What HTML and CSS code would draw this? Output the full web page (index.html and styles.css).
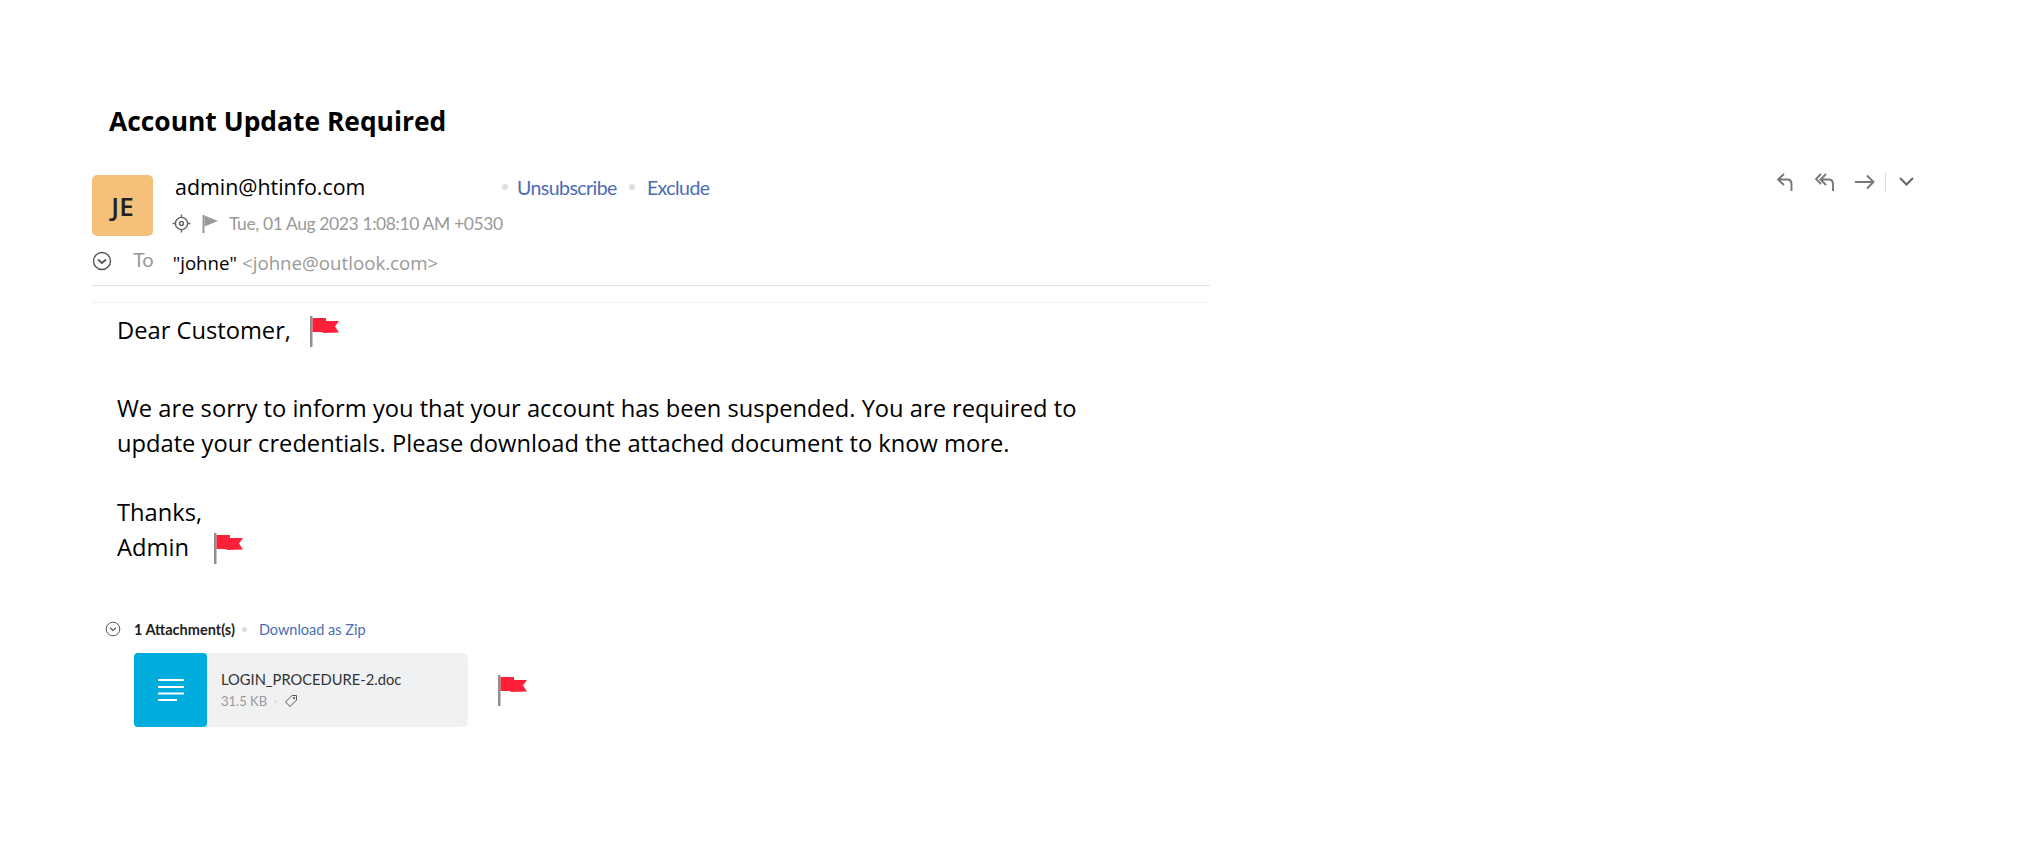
FILE: index.html
```html
<!DOCTYPE html>
<html lang="en">
<head>
    <meta charset="UTF-8">
    <title>Account Update Required</title>
    <link rel="stylesheet" href="styles.css">
</head>
<body>
<div class="mailView">
    <h1 class="subject">Account Update Required</h1>

    <div class="mailHeader">
        <div class="avatar">JE</div>
        <div class="senderInfo">
            <div class="senderRow">
                <span class="sender">admin@htinfo.com</span>
                <span class="dot"></span>
                <a class="link first">Unsubscribe</a>
                <span class="dot"></span>
                <a class="link">Exclude</a>
            </div>
            <div class="dateRow">
                <svg class="targetIcon" width="19" height="19" viewBox="0 0 18 18" fill="none" stroke="#666" stroke-width="1.4">
                    <circle cx="9" cy="9" r="5.8"/>
                    <circle cx="9" cy="9" r="1.8"/>
                    <path d="M9 0.5v2.7M9 14.8v2.7M0.5 9h2.7M14.8 9h2.7"/>
                </svg>
                <svg class="flagIcon" width="16" height="18" viewBox="0 0 16 18">
                    <path d="M0.5 0h2v18h-2z" fill="#999"/>
                    <path d="M2.500 0.500L16 6 2.500 11.500z" fill="#999"/>
                </svg>
                <span class="date">Tue, 01 Aug 2023 1:08:10 AM +0530</span>
            </div>
        </div>
        <div class="actions">
            <svg width="17" height="20" viewBox="0 0 17 20" fill="none" stroke="#777" stroke-width="1.9">
                <path d="M8 2L2 7.500 8 13M2 7.500h9c3 0 4.500 1.500 4.500 4.500v7"/>
            </svg>
            <svg class="replyAll" width="20" height="20" viewBox="0 0 20 20" fill="none" stroke="#777" stroke-width="1.9">
                <path d="M6 2L1 7 6 12M11 2L5.500 7.500 11 13M5.500 7.500h8c3 0 4.500 1.500 4.500 4.500v7"/>
            </svg>
            <svg class="forward" width="21" height="20" viewBox="0 0 21 20" fill="none" stroke="#777" stroke-width="1.9">
                <path d="M1 10h18M13 3.500l6.500 6.500-6.500 6.500"/>
            </svg>
            <span class="actionSep"></span>
            <svg class="more" width="17" height="20" viewBox="0 0 17 20" fill="none" stroke="#666" stroke-width="2">
                <path d="M2 6l6.500 6.500L15 6"/>
            </svg>
        </div>
    </div>

    <div class="toRow">
        <svg class="expandIcon" width="20" height="20" viewBox="0 0 20 20" fill="none" stroke="#555" stroke-width="1.400">
            <circle cx="10" cy="10" r="8.500"/>
            <path d="M6 8.500l4 3.500 4-3.500" stroke-width="1.700"/>
        </svg>
        <span class="toLabel">To</span>
        <span class="toName">"johne"</span>
        <span class="toMail">&lt;johne@outlook.com&gt;</span>
    </div>
    <div class="rule"></div>
    <div class="rule ruleLight"></div>

    <div class="mailBody">
        <p class="line">Dear Customer, <svg class="redFlag" width="31" height="32" viewBox="0 0 31 32"><use href="#flag"/></svg></p>
        <p class="line gap">We are sorry to inform you that your account has been suspended. You are required to</p>
        <p class="line">update your credentials. Please download the attached document to know more.</p>
        <p class="line gap gapSmall">Thanks,</p>
        <p class="line wideGap">Admin <svg class="redFlag" width="31" height="32" viewBox="0 0 31 32"><use href="#flag"/></svg></p>
    </div>

    <div class="attachHead">
        <svg width="16" height="16" viewBox="0 0 16 16" fill="none" stroke="#555" stroke-width="1">
            <circle cx="8" cy="8" r="6.800"/>
            <path d="M5 6.800l3 2.700 3-2.700" stroke-width="1.200"/>
        </svg>
        <span class="attachCount">1 Attachment(s)</span>
        <span class="dot small"></span>
        <a class="link zip">Download as Zip</a>
    </div>
    <div class="attachRow">
        <div class="attachCard">
            <div class="docIcon">
                <svg width="26" height="24" viewBox="0 0 26 24" fill="none" stroke="#fff" stroke-width="2">
                    <path d="M0 2h26M0 9h26M0 15.500h26M0 22h19"/>
                </svg>
            </div>
            <div class="docInfo">
                <div class="docName">LOGIN_PROCEDURE-2.doc</div>
                <div class="docMeta">
                    <span>31.5 KB</span>
                    <span class="dot tiny"></span>
                    <svg width="14" height="14" viewBox="0 0 14 14" fill="none" stroke="#555" stroke-width="1">
                        <path d="M1.500 8L8 1.500h4.500V6L6 12.500z"/>
                        <circle cx="10" cy="4" r="0.800"/>
                    </svg>
                </div>
            </div>
        </div>
        <svg class="redFlag" width="31" height="32" viewBox="0 0 31 32"><use href="#flag"/></svg>
    </div>
</div>

<svg width="0" height="0" class="defs">
    <defs>
        <g id="flag">
            <path d="M1 1h2.500v31H1z" fill="#8f8f8f"/>
            <path d="M3.500 3H17v14H3.500z" fill="#fe2038"/>
            <path d="M17 6h13l-4 5.500 4 6-16.500 .5V17H17z" fill="#fe2038"/>
        </g>
    </defs>
</svg>
</body>
</html>
```

FILE: styles.css
```css
* {
    box-sizing: border-box;
}

body {
    margin: 0;
    background: #fff;
    font-family: "Open Sans", sans-serif;
    color: #000;
}

.defs {
    position: absolute;
}

.mailView {
    padding: 103px 0 0 92px;
}

.subject {
    margin: 0 0 35px 17px;
    font-size: 26.4px;
    line-height: 37px;
    font-weight: 700;
}

/*Header*/
.mailHeader {
    display: flex;
    align-items: flex-start;
    width: 1823px;
}

.avatar {
    width: 61px;
    height: 61px;
    border-radius: 5px;
    background: #f5c07a;
    color: #222;
    font-size: 26px;
    font-weight: 600;
    display: flex;
    align-items: center;
    justify-content: center;
}

.senderInfo {
    margin-left: 19px;
    flex: 1;
}

.senderRow {
    display: flex;
    align-items: center;
    height: 24px;
}

.sender {
    width: 327px;
    margin-left: 3px;
    font-size: 21.4px;
    position: relative;
    top: -1px;
}

.dot {
    width: 6px;
    height: 6px;
    border-radius: 50%;
    background: #ddd;
}

.link {
    color: #4a6cb3;
    font-family: "Lato", sans-serif;
    font-size: 19.5px;
    letter-spacing: -0.55px;
    margin: 0 12px;
}

.link.first {
    margin-left: 9px;
}

.dateRow {
    display: flex;
    align-items: center;
    margin-top: 14px;
}

.flagIcon {
    margin-left: 11px;
}

.date {
    margin-left: 11px;
    color: #999;
    font-family: "Lato", sans-serif;
    font-size: 17.5px;
    letter-spacing: -0.4px;
}

.actions {
    display: flex;
    align-items: center;
    margin-top: -3px;
}

.replyAll {
    margin-left: 22px;
}

.forward {
    margin-left: 19px;
}

.actionSep {
    width: 1px;
    height: 20px;
    background: #ddd;
    margin-left: 10px;
}

.more {
    margin-left: 12px;
}

/*To row*/
.toRow {
    display: flex;
    align-items: center;
    height: 28px;
    margin-top: 11px;
}

.toLabel {
    margin-left: 21px;
    margin-top: -5px;
    color: #999;
    font-family: "Lato", sans-serif;
    font-size: 20px;
}

.toName {
    margin-left: 19px;
    margin-top: 3px;
    font-size: 18.7px;
}

.toMail {
    margin-left: 5px;
    margin-top: 3px;
    color: #999;
    font-size: 18.7px;
}

.rule {
    width: 1118px;
    height: 1px;
    margin-top: 10px;
    background: #dcdfe3;
}

.ruleLight {
    margin-top: 16px;
    background: #eef0f2;
}

/*Body*/
.mailBody {
    margin: 10px 0 0 25px;
    font-size: 23.7px;
    line-height: 35px;
}

.line {
    margin: 0;
    display: flex;
    align-items: center;
    gap: 18px;
}

.wideGap {
    gap: 24px;
}

.gap {
    margin-top: 43px;
}

.gapSmall {
    margin-top: 34px;
}

/*Attachments*/
.attachHead {
    display: flex;
    align-items: center;
    margin: 52px 0 0 13px;
    height: 24px;
    font-family: "Lato", sans-serif;
}

.attachCount {
    margin-left: 13px;
    font-size: 14.5px;
    font-weight: 700;
    color: #222;
}

.dot.small {
    width: 5px;
    height: 5px;
    margin-left: 7px;
}

.link.zip {
    font-size: 14.5px;
    letter-spacing: 0;
    margin-left: 12px;
}

.attachRow {
    display: flex;
    align-items: center;
    margin: 12px 0 0 42px;
    gap: 29px;
}

.attachCard {
    display: flex;
    width: 334px;
    height: 74px;
    background: #f0f1f3;
    border-radius: 5px;
    font-family: "Lato", sans-serif;
}

.docIcon {
    width: 73px;
    background: #00acdc;
    border-radius: 4px;
    display: flex;
    align-items: center;
    justify-content: center;
}

.docInfo {
    margin-left: 14px;
    padding-top: 17px;
}

.docName {
    font-size: 14.7px;
    color: #333;
}

.docMeta {
    display: flex;
    align-items: center;
    gap: 7px;
    margin-top: 5px;
    font-size: 13px;
    color: #999;
}

.dot.tiny {
    width: 3px;
    height: 3px;
}
```
